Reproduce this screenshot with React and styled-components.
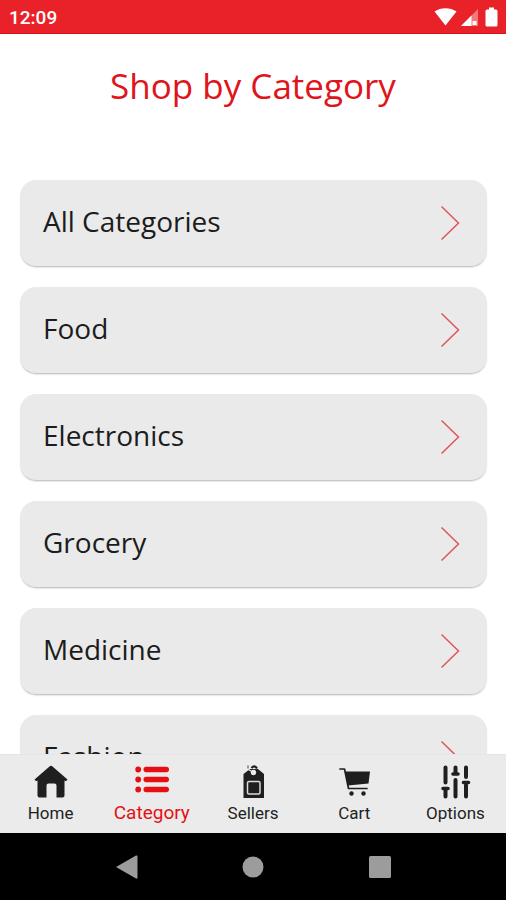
import React, { useState } from 'react'
import styled, { createGlobalStyle } from 'styled-components'

const GlobalStyle = createGlobalStyle`
  * {
    box-sizing: border-box;
  }

  body {
    margin: 0;
    background: #fff;
    font-family: 'Open Sans', 'Noto Sans', sans-serif;
  }
`

const Screen = styled.div`
  display: flex;
  flex-direction: column;
  height: 100vh;
  overflow: hidden;
`

const StatusBar = styled.header`
  display: flex;
  flex: none;
  align-items: center;
  justify-content: space-between;
  height: 34px;
  padding: 2px 8px 0 9px;
  background: #e9222a;
  border-bottom: 1px solid #d8141a;
  color: #fff;
`

const Clock = styled.time`
  font-family: Roboto, sans-serif;
  font-size: 19px;
  font-weight: 500;
  line-height: 24px;
`

const StatusIcons = styled.div`
  display: flex;
  align-items: center;
  padding-bottom: 2px;

  svg {
    display: block;
  }
`

const Main = styled.main`
  display: flex;
  flex: 1;
  flex-direction: column;
  min-height: 0;
`

const Title = styled.h1`
  flex: none;
  margin: 0;
  padding: 28px 20px 70px;
  color: #e0141b;
  font-size: 35px;
  font-weight: 400;
  line-height: 48px;
  text-align: center;
`

const CategoryList = styled.ul`
  display: flex;
  flex: 1;
  flex-direction: column;
  gap: 21px;
  min-height: 0;
  margin: 0;
  padding: 0 19px 20px 20px;
  overflow-y: auto;
  list-style: none;
  scrollbar-width: none;
`

const CategoryCard = styled.button`
  display: flex;
  align-items: center;
  justify-content: space-between;
  width: 100%;
  height: 86px;
  padding: 0 26px 0 23px;
  border: 0;
  border-radius: 16px;
  background: #eaeaea;
  box-shadow: 0 2px 2px -1px rgba(0, 0, 0, 0.3);
  color: #1c1c1c;
  font-family: inherit;
  font-size: 28px;
  font-weight: 400;
  line-height: 40px;
  text-align: left;
  cursor: pointer;
`

const CategoryName = styled.span`
  padding-bottom: 4px;
`

const TabBar = styled.nav`
  display: flex;
  flex: none;
  height: 79px;
  border-top: 1px solid #e6e6e6;
  background: #ebebeb;
`

const Tab = styled.button`
  display: flex;
  flex: 1;
  flex-direction: column;
  align-items: center;
  justify-content: flex-start;
  min-width: 0;
  padding: 9px 0 0;
  border: 0;
  background: none;
  color: ${({ $active }) => ($active ? '#e60f14' : '#1f1f1f')};
  font-family: Roboto, sans-serif;
  font-size: ${({ $active }) => ($active ? '19px' : '17px')};
  line-height: 24px;
  cursor: pointer;

  svg {
    display: block;
    margin-bottom: 1px;
  }
`

const SystemBar = styled.footer`
  display: flex;
  flex: none;
  align-items: center;
  height: 67px;
  padding: 0 12.5%;
  background: #000;
`

const SystemButton = styled.button`
  display: flex;
  flex: 1;
  align-items: center;
  justify-content: center;
  height: 48px;
  padding: 0;
  border: 0;
  background: none;
  color: #9c9c9c;
  cursor: pointer;
`

const WifiIcon = () => (
  <svg width="23" height="20" viewBox="0 0 23 20" fill="currentColor" aria-hidden="true">
    <path d="M0.500 4.600C6.500 0 16.500 0 22.500 4.600L11.500 18.500Z" />
  </svg>
)

const SignalIcon = () => (
  <svg width="28" height="20" viewBox="0 0 28 20" fill="currentColor" aria-hidden="true">
    <path d="M21 2V19H4Z" opacity="0.4" />
    <path d="M14.500 8.500V19H4Z" />
    <path d="M15.500 14h4v4h-4z" />
  </svg>
)

const BatteryIcon = () => (
  <svg width="13" height="20" viewBox="0 0 13 20" fill="currentColor" aria-hidden="true">
    <path d="M4 .5h5v2h2q1.500 0 1.500 1.500v14q0 1.500-1.500 1.500H2Q.5 19.500.5 18V4Q.5 2.500 2 2.500h2Z" />
  </svg>
)

const Chevron = () => (
  <svg width="21" height="36" viewBox="0 0 21 36" fill="none" stroke="#e0555a" strokeWidth="1.500" aria-hidden="true">
    <path d="M1.500 1.500 18.500 18 1.500 34.500" />
  </svg>
)

const HomeIcon = () => (
  <svg width="34" height="36" viewBox="0 0 34 36" fill="currentColor" aria-hidden="true">
    <path d="M15.500 2.500Q17 1 18.500 2.500L33.500 15.500 32 17.300 30.500 16.500V31.500Q30.500 33.500 28.500 33.500H22.500V21.500Q22.500 19.500 20.500 19.500H14.500Q12.500 19.500 12.500 21.500V33.500H5.500Q3.500 33.500 3.500 31.500V16.500L2 17.300.5 15.500Z" />
  </svg>
)

const CategoryIcon = () => (
  <svg width="34" height="36" viewBox="0 0 34 36" fill="currentColor" aria-hidden="true">
    {[5.5, 15.5, 25.5].map((y) => (
      <React.Fragment key={y}>
        <circle cx="3.200" cy={y} r="2.900" />
        <rect x="8.500" y={y - 2.7} width="25.500" height="5.400" rx="2.700" />
      </React.Fragment>
    ))}
  </svg>
)

const SellersIcon = () => (
  <svg width="34" height="36" viewBox="0 0 34 36" fill="none" aria-hidden="true">
    <path d="M7.500 10 14 5H22L28 10V34H7.500Z" fill="currentColor" />
    <circle cx="17.500" cy="8.500" r="2.700" fill="#ebebeb" />
    <path d="M12.500 5.500 16.500 8" stroke="#ebebeb" strokeWidth="1.200" />
    <path d="M15.500 4Q18.500.5 21 4.500" stroke="currentColor" strokeWidth="2.200" />
    <path d="M12 1.500v3" stroke="currentColor" strokeWidth=".8" />
    <rect x="11.500" y="17.500" width="12.500" height="12.500" rx="1.500" stroke="#dcdcdc" strokeWidth="1.500" />
  </svg>
)

const CartIcon = () => (
  <svg width="34" height="36" viewBox="0 0 34 36" fill="none" aria-hidden="true">
    <path
      d="M3 5H7.500L11.500 24.500H30"
      stroke="currentColor"
      strokeWidth="1.700"
      strokeLinecap="round"
      strokeLinejoin="round"
    />
    <path d="M8 7.500H33L31.500 19.500 11 21.500Z" fill="currentColor" />
    <circle cx="14.500" cy="29.500" r="2.200" fill="currentColor" />
    <circle cx="26.500" cy="29.500" r="2.200" fill="currentColor" />
  </svg>
)

const OptionsIcon = () => (
  <svg width="34" height="36" viewBox="0 0 34 36" stroke="currentColor" strokeLinecap="round" aria-hidden="true">
    <path d="M7.500 3.500V18.500M7.500 26V32.500M17.500 3.500V8M17.500 16V32.500M28 3.500V13M28 21V32.500" strokeWidth="4" />
    <path d="M5 24.500H10M15 10H20M25.500 18.500H30.500" strokeWidth="3.600" />
  </svg>
)

const categories = ['All Categories', 'Food', 'Electronics', 'Grocery', 'Medicine', 'Fashion']

const tabs = [
  { label: 'Home', Icon: HomeIcon },
  { label: 'Category', Icon: CategoryIcon },
  { label: 'Sellers', Icon: SellersIcon },
  { label: 'Cart', Icon: CartIcon },
  { label: 'Options', Icon: OptionsIcon },
]

const App = () => {
  const [activeTab, setActiveTab] = useState('Category')

  return (
    <Screen>
      <GlobalStyle />
      <StatusBar>
        <Clock>12:09</Clock>
        <StatusIcons>
          <WifiIcon />
          <SignalIcon />
          <BatteryIcon />
        </StatusIcons>
      </StatusBar>

      <Main>
        <Title>Shop by Category</Title>
        <CategoryList>
          {categories.map((name) => (
            <li key={name}>
              <CategoryCard type="button">
                <CategoryName>{name}</CategoryName>
                <Chevron />
              </CategoryCard>
            </li>
          ))}
        </CategoryList>
      </Main>

      <TabBar>
        {tabs.map(({ label, Icon }) => (
          <Tab
            key={label}
            type="button"
            $active={label === activeTab}
            aria-current={label === activeTab ? 'page' : undefined}
            onClick={() => setActiveTab(label)}
          >
            <Icon />
            {label}
          </Tab>
        ))}
      </TabBar>

      <SystemBar>
        <SystemButton type="button" aria-label="Back">
          <svg width="22" height="24" viewBox="0 0 22 24" fill="currentColor">
            <path d="M0 12 20 .5Q21.500 0 21.500 1.500V22.500Q21.500 24 20 23.500Z" />
          </svg>
        </SystemButton>
        <SystemButton type="button" aria-label="Home">
          <svg width="22" height="22" viewBox="0 0 22 22" fill="currentColor">
            <circle cx="11" cy="11" r="10.500" />
          </svg>
        </SystemButton>
        <SystemButton type="button" aria-label="Recent apps">
          <svg width="22" height="22" viewBox="0 0 22 22" fill="currentColor">
            <rect width="22" height="22" rx="1.500" />
          </svg>
        </SystemButton>
      </SystemBar>
    </Screen>
  )
}

export default App
